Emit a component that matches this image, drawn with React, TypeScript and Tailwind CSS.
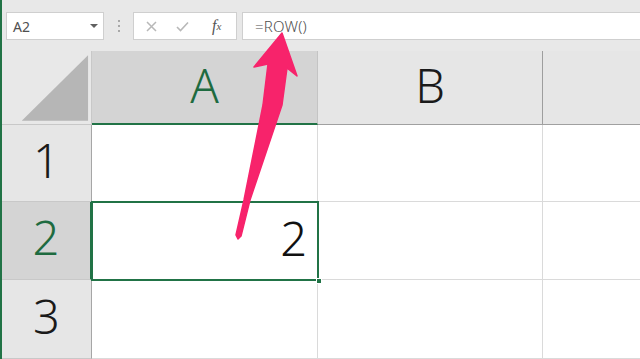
import React from 'react';

const Arrow = () => (
  <svg className="absolute left-0 top-0 pointer-events-none" width="640" height="359" viewBox="0 0 640 359">
    <polygon
      fill="#f7236b"
      points="280,33 295,76 285,68 280,105 248,200 239,236 236,239 234,235 242,200 261,105 266,64 252,67"
      strokeLinejoin="round"
      stroke="#f7236b"
      strokeWidth="1.5"
    />
  </svg>
);

const FormulaBar = () => (
  <div className="flex items-start h-[51px] pt-[12px] pl-[4px] font-['Noto_Sans',sans-serif]">
    <div className="flex items-center justify-between w-[98px] h-[28px] bg-white border border-[#cfcfcf] pl-[6px] pr-[5px]">
      <span className="text-[14px] text-[#505050]">A2</span>
      <span className="w-0 h-0 border-l-[4px] border-r-[4px] border-t-[4px] border-l-transparent border-r-transparent border-t-[#606060]" />
    </div>
    <div className="flex flex-col items-center justify-center gap-[3px] w-[29px] h-[28px]">
      <span className="w-[2px] h-[2px] bg-[#a8a8a8]" />
      <span className="w-[2px] h-[2px] bg-[#a8a8a8]" />
      <span className="w-[2px] h-[2px] bg-[#a8a8a8]" />
    </div>
    <div className="flex items-center w-[104px] h-[28px] bg-white border border-[#cfcfcf] pl-[2px]">
      <span className="flex items-center justify-center w-[32px]">
        <svg width="11" height="11" viewBox="0 0 11 11"><path d="M1 1L10 10M10 1L1 10" stroke="#b8b8b8" strokeWidth="1.5" /></svg>
      </span>
      <span className="flex items-center justify-center w-[32px]">
        <svg width="13" height="11" viewBox="0 0 13 11"><path d="M1 6L4.5 9.5L12 1.5" stroke="#b8b8b8" strokeWidth="1.6" fill="none" /></svg>
      </span>
      <span className="flex items-center justify-center w-[40px] text-[16px] italic text-[#555] font-['Liberation_Serif',serif]">
        f<span className="text-[11px]">x</span>
      </span>
    </div>
    <div className="flex items-center flex-1 h-[28px] ml-[5px] bg-white border border-[#cfcfcf] border-r-0 pl-[12px]">
      <span className="text-[15px] font-light text-[#505050] tracking-[0.2px]">=ROW()</span>
    </div>
  </div>
);

export default function App() {
  const big = "font-['Noto_Sans',sans-serif] font-light text-[47px] leading-none";
  return (
    <div className="relative w-[640px] h-[359px] overflow-hidden bg-[#e8e8e8] border-l-2 border-[#217346]">
      <FormulaBar />
      <div className="grid grid-cols-[90px_226px_225px_1fr] grid-rows-[74px_77px_78px_79px]">
        {/* header row */}
        <div className="flex items-center justify-center bg-[#e8e8e8] border-r border-b border-[#c8c8c8]">
          <svg width="90" height="73" viewBox="0 0 90 73">
            <polygon points="87,4 87,70 20,70" fill="#b6b6b6" />
          </svg>
        </div>
        <div className={`flex items-center justify-center bg-[#d4d4d4] border-r border-[#c4c4c4] border-b-2 border-b-[#217346] text-[#1e6b40] pb-[4px] ${big}`}>
          A
        </div>
        <div className={`flex items-center justify-center bg-[#e6e6e6] border-r border-[#9e9e9e] border-b border-b-[#a0a0a0] text-[#1a1a1a] pb-[4px] ${big}`}>
          B
        </div>
        <div className="bg-[#e6e6e6] border-b border-[#a0a0a0]" />

        {/* row 1 */}
        <div className={`flex items-center justify-center bg-[#e6e6e6] border-r border-r-[#a6a6a6] border-b border-b-[#c8c8c8] text-[#1a1a1a] pb-[6px] ${big}`}>
          1
        </div>
        <div className="bg-white border-r border-b border-[#dadada]" />
        <div className="bg-white border-r border-b border-[#dadada]" />
        <div className="bg-white border-b border-[#dadada]" />

        {/* row 2 */}
        <div className={`flex items-center justify-center bg-[#d4d4d4] border-r-2 border-r-[#217346] border-b border-b-[#c8c8c8] text-[#1e6b40] pb-[6px] ${big}`}>
          2
        </div>
        <div className={`relative flex items-center justify-end pr-[11px] pb-[6px] bg-white text-[#111] ${big}`}>
          2
          <div className="absolute inset-[-1px] border-2 border-[#217346]" />
          <div className="absolute right-[-4px] bottom-[-4px] w-[6px] h-[6px] bg-[#217346] border border-white" />
        </div>
        <div className="bg-white border-r border-b border-[#dadada]" />
        <div className="bg-white border-b border-[#dadada]" />

        {/* row 3 */}
        <div className={`flex items-center justify-center bg-[#e6e6e6] border-r border-r-[#a6a6a6] border-b border-b-[#c8c8c8] text-[#1a1a1a] pb-[6px] ${big}`}>
          3
        </div>
        <div className="bg-white border-r border-b border-[#dadada]" />
        <div className="bg-white border-r border-b border-[#dadada]" />
        <div className="bg-white border-b border-[#dadada]" />
      </div>
      <Arrow />
    </div>
  );
}
